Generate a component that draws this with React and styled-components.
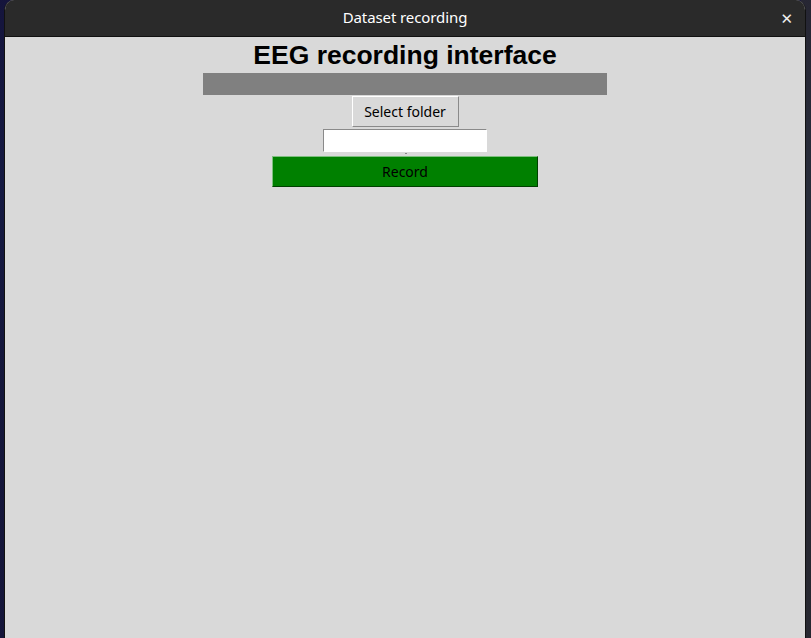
import styled, { createGlobalStyle } from 'styled-components';

const Global = createGlobalStyle`
  html, body {
    margin: 0;
    padding: 0;
    width: 811px;
    height: 638px;
    overflow: hidden;
  }
  * { box-sizing: border-box; }
`;

const Desktop = styled.div`
  width: 811px;
  height: 638px;
  padding: 0 5px 0 4px;
  background:
    linear-gradient(90deg, rgba(20, 20, 60, 0.9) 0 10px, transparent 10px calc(100% - 10px), rgba(40, 40, 50, 0.9) calc(100% - 10px)),
    linear-gradient(180deg, #1a1840 0%, #1d4f7a 30%, #1b2c30 60%, #1a2224 100%);
`;

const Window = styled.div`
  height: 100%;
  display: flex;
  flex-direction: column;
  border-left: 1px solid #111;
  border-right: 1px solid #111;
  border-radius: 10px 10px 0 0;
  overflow: hidden;
  background: #d9d9d9;
`;

const TitleBar = styled.div`
  height: 37px;
  flex: none;
  background: #2a2a2a;
  border-bottom: 1px solid #111;
  display: flex;
  align-items: center;
  justify-content: center;
  padding-bottom: 2px;
  position: relative;
  color: #ffffff;
  font-family: "Noto Sans", "DejaVu Sans", sans-serif;
  font-size: 15px;
  letter-spacing: -0.1px;
`;

const Close = styled.span`
  position: absolute;
  right: 12px;
  top: 8px;
  font-size: 15px;
  font-weight: bold;
  color: #eee;
`;

const Content = styled.div`
  flex: 1;
  display: flex;
  flex-direction: column;
  align-items: center;
  padding-top: 2px;
  font-family: "Noto Sans", "DejaVu Sans", sans-serif;
`;

const Heading = styled.h1`
  margin: 0;
  font-family: "Liberation Sans", Arial, sans-serif;
  font-weight: bold;
  font-size: 26.5px;
  line-height: 32px;
  color: #000;
`;

const StatusBar = styled.div`
  width: 404px;
  height: 22px;
  margin-top: 2px;
  background: #808080;
`;

const TkButton = styled.button`
  width: ${({ w }) => w}px;
  height: ${({ h }) => h}px;
  margin-top: ${({ mt }) => mt}px;
  padding: 0;
  background: ${({ bg }) => bg};
  border: 1px solid;
  border-color: ${({ light }) => light} ${({ dark }) => dark} ${({ dark }) => dark} ${({ light }) => light};
  font-family: "Noto Sans", "DejaVu Sans", sans-serif;
  font-size: 14px;
  color: #000;
`;

const Entry = styled.div`
  width: 164px;
  height: 23px;
  margin-top: 2px;
  background: #fff;
  border: 1px solid;
  border-color: #8a8a8a #ffffff #ffffff #8a8a8a;
  position: relative;
`;

const Tick = styled.span`
  position: absolute;
  left: 81px;
  bottom: -3px;
  width: 2px;
  height: 1px;
  background: #888;
`;

export default function App() {
  return (
    <>
      <Global />
      <Desktop>
        <Window>
          <TitleBar>
            Dataset recording
            <Close>✕</Close>
          </TitleBar>
          <Content>
            <Heading>EEG recording interface</Heading>
            <StatusBar />
            <TkButton w={107} h={31} mt={1} bg="#d9d9d9" light="#ffffff" dark="#8a8a8a">
              Select folder
            </TkButton>
            <Entry>
              <Tick />
            </Entry>
            <TkButton w={266} h={31} mt={4} bg="#008000" light="#7fbf7f" dark="#004000">
              Record
            </TkButton>
          </Content>
        </Window>
      </Desktop>
    </>
  );
}
